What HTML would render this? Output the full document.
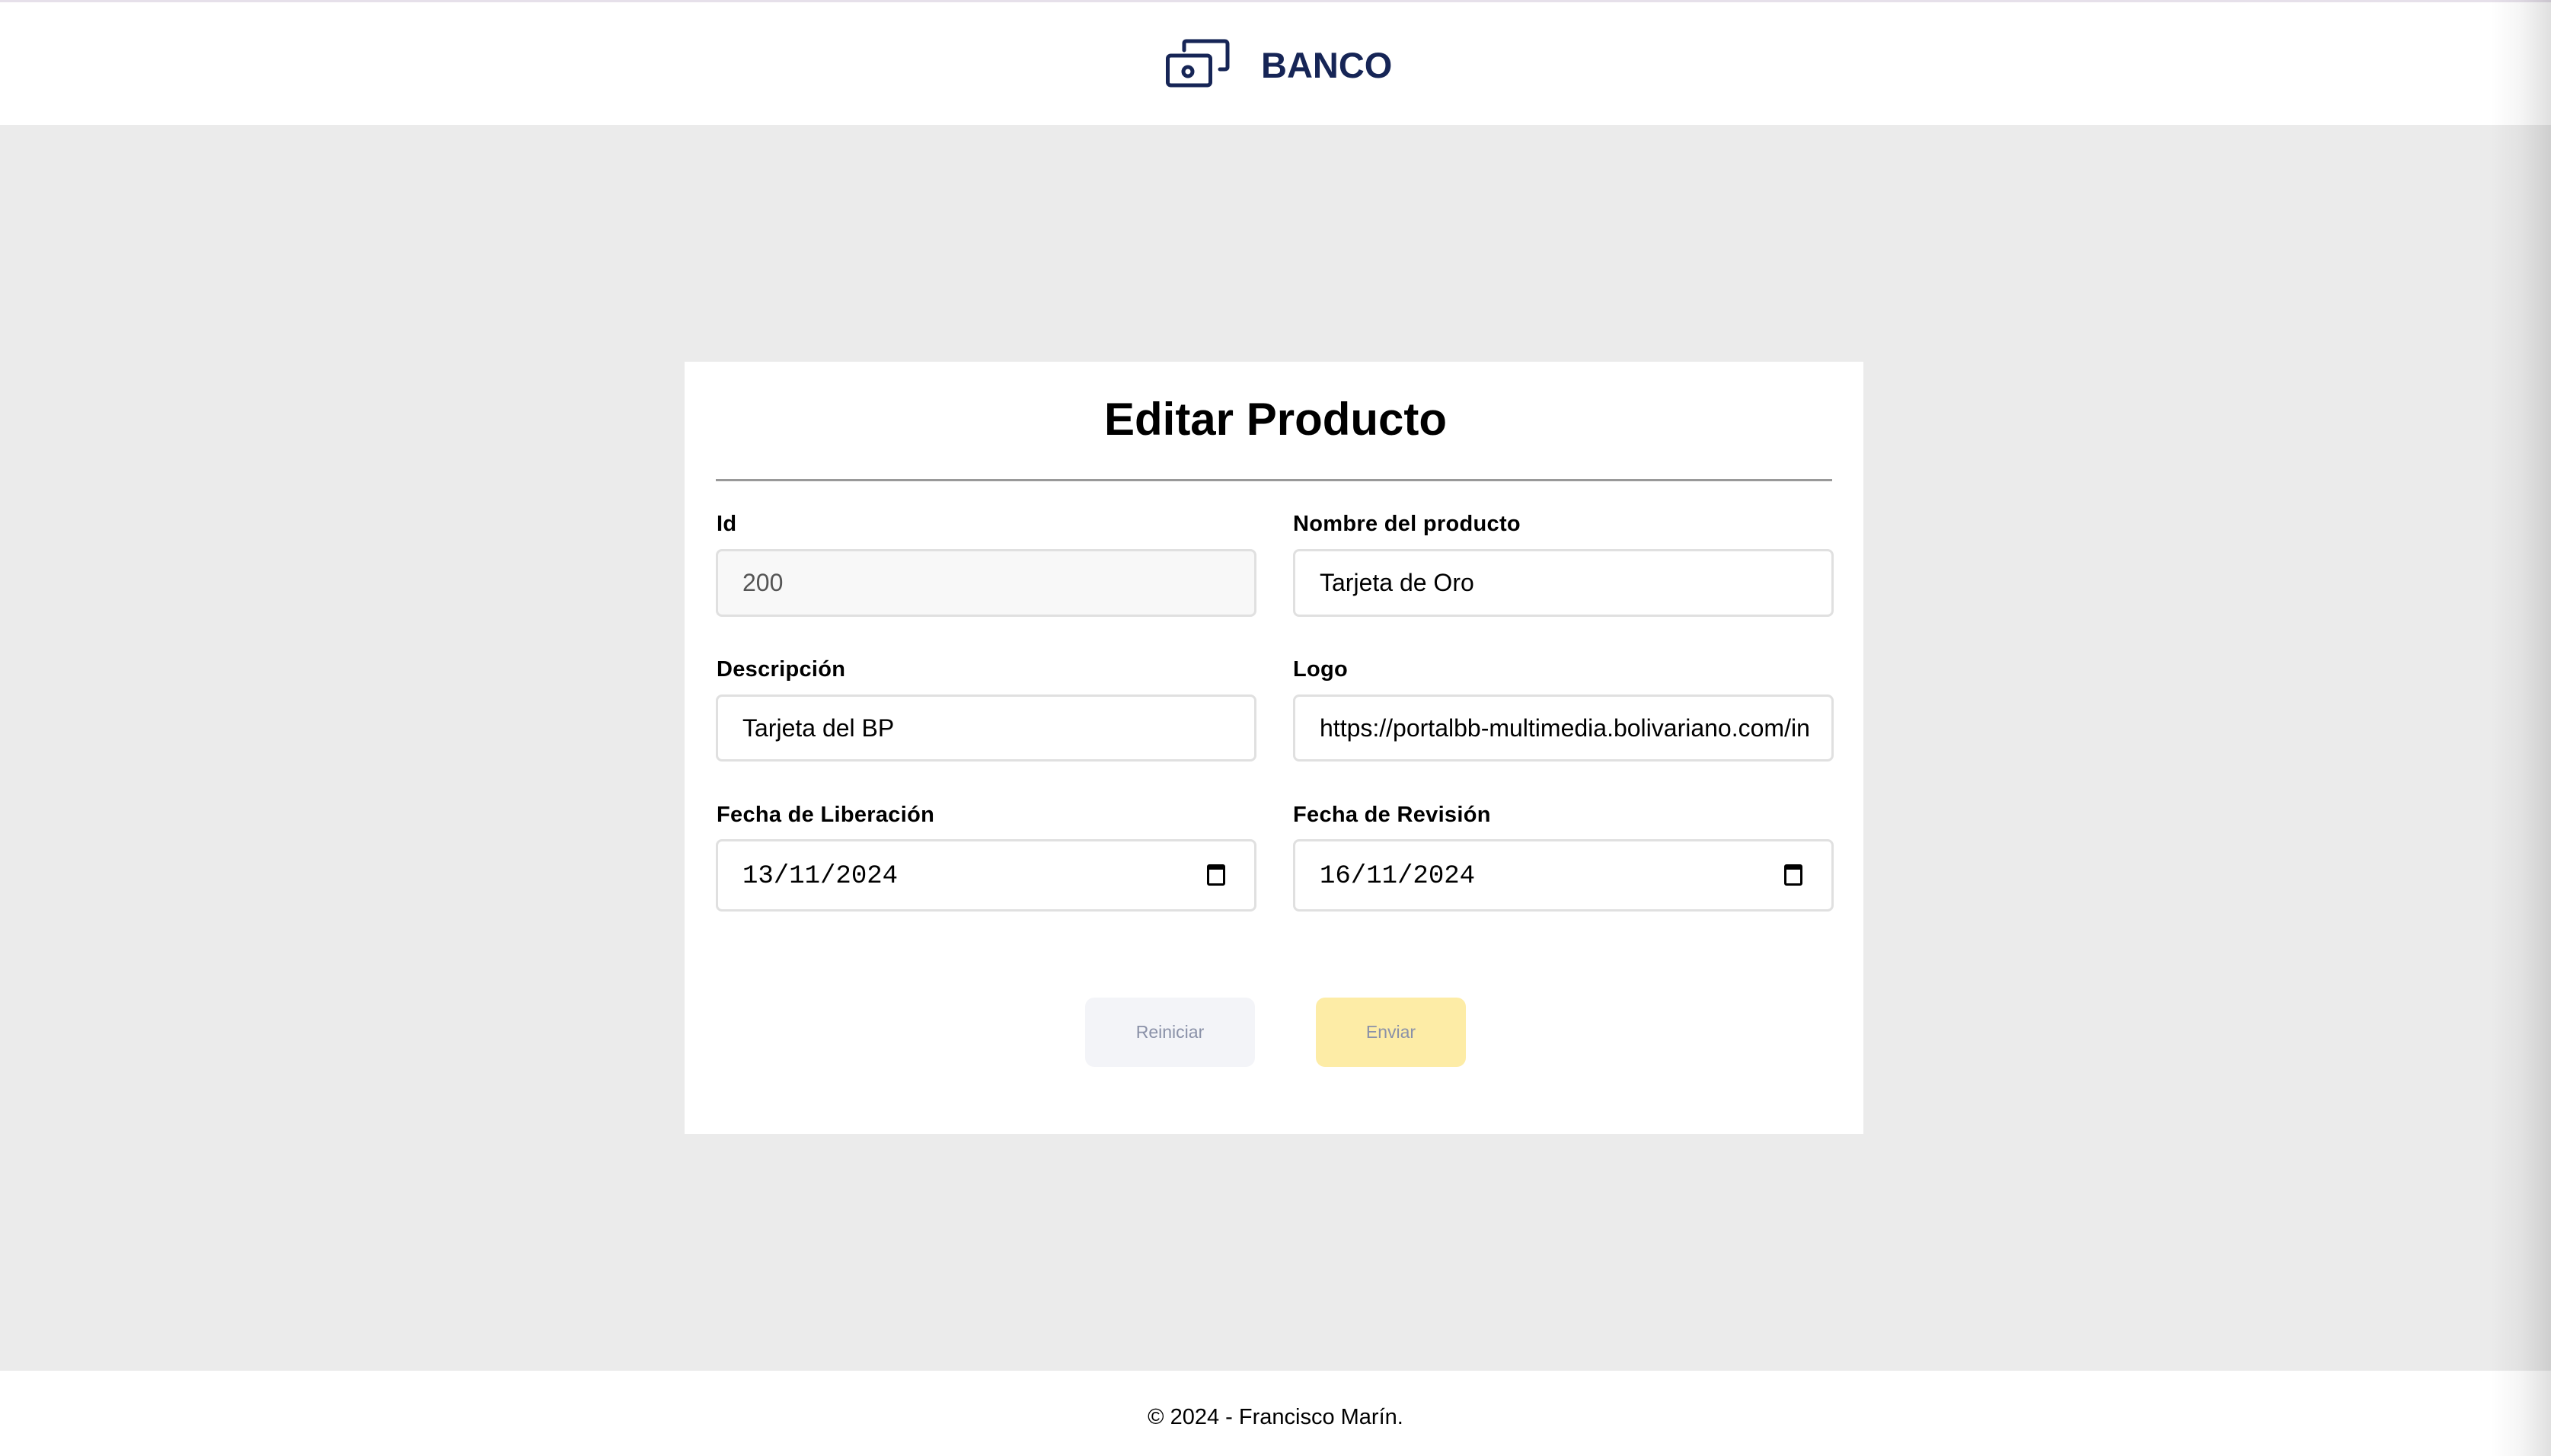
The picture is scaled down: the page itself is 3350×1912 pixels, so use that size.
<!DOCTYPE html>
<html><head><meta charset="utf-8"><style>
*{box-sizing:border-box;margin:0;padding:0}
body{width:3350px;height:1912px;position:relative;background:#ebebeb;font-family:"Liberation Sans",Arial,sans-serif;overflow:hidden}
.topline{position:absolute;left:0;top:0;width:3350px;height:3px;background:#e6e0ea}
.header{position:absolute;left:0;top:3px;width:3350px;height:161px;background:#fff}
.footer{position:absolute;left:0;top:1800px;width:3350px;height:112px;background:#fff}
.shadow{position:absolute;right:0;top:0;width:80px;height:1912px;background:linear-gradient(to right,rgba(0,0,0,0),rgba(0,0,0,0.04) 50%,rgba(0,0,0,0.12));}
.card{position:absolute;left:899px;top:475px;width:1548px;height:1014px;background:#fff}
.title{position:absolute;left:0;width:3350px;top:516px;text-align:center;font-weight:bold;font-size:60px;color:#000}
.hr{position:absolute;left:940px;top:629px;width:1466px;height:3px;background:#999}
.lbl{position:absolute;font-size:29px;color:#000;font-weight:bold;letter-spacing:0.3px}
.inp{position:absolute;border:3px solid #e0e0e0;border-radius:8px;background:#fff;font-size:32px;color:#000;padding-left:32px;display:flex;align-items:center}
.date{font-family:"Liberation Mono",monospace;font-size:34px;padding-top:2px}
.cal{position:absolute;right:38px;top:50%;margin-top:-15px;width:24px;height:28px;border:3px solid #000;border-top-width:7px;border-radius:3px}
.btn{position:absolute;border-radius:12px;font-size:23px;color:#8a91a8;display:flex;align-items:center;justify-content:center}
</style></head><body>
<div class="topline"></div>
<div class="header"></div>
<svg style="position:absolute;left:1530px;top:48px" width="90" height="72" viewBox="0 0 90 72">
<rect x="3.5" y="25" width="56" height="39" rx="4" fill="none" stroke="#162556" stroke-width="5"/>
<circle cx="30" cy="46" r="6" fill="none" stroke="#162556" stroke-width="5"/>
<path d="M25 18 V9 Q25 6 28 6 H78 Q82 6 82 10 V40 Q82 43 78 43 H72" fill="none" stroke="#162556" stroke-width="5" stroke-linecap="round"/>
</svg>
<div style="position:absolute;left:1656px;top:58px;font-size:47px;font-weight:bold;color:#162556;letter-spacing:0px">BANCO</div>
<div class="card"></div>
<div class="title">Editar Producto</div>
<div class="hr"></div>
<div class="lbl" style="left:941px;top:672px">Id</div>
<div class="lbl" style="left:1698px;top:672px">Nombre del producto</div>
<div class="inp" style="left:940px;top:721px;width:710px;height:89px;background:#f8f8f8;color:#555">200</div>
<div class="inp" style="left:1698px;top:721px;width:710px;height:89px">Tarjeta de Oro</div>
<div class="lbl" style="left:941px;top:863px">Descripción</div>
<div class="lbl" style="left:1698px;top:863px">Logo</div>
<div class="inp" style="left:940px;top:912px;width:710px;height:88px">Tarjeta del BP</div>
<div class="inp" style="left:1698px;top:912px;width:710px;height:88px;overflow:hidden;white-space:nowrap">https://portalbb-multimedia.bolivariano.com/in</div>
<div class="lbl" style="left:941px;top:1054px">Fecha de Liberación</div>
<div class="lbl" style="left:1698px;top:1054px">Fecha de Revisión</div>
<div class="inp date" style="left:940px;top:1102px;width:710px;height:95px">13/11/2024<span class="cal"></span></div>
<div class="inp date" style="left:1698px;top:1102px;width:710px;height:95px">16/11/2024<span class="cal"></span></div>
<div class="btn" style="left:1425px;top:1310px;width:223px;height:91px;background:#f3f4f8">Reiniciar</div>
<div class="btn" style="left:1728px;top:1310px;width:197px;height:91px;background:#fdeca6">Enviar</div>
<div class="footer"></div>
<div style="position:absolute;left:0;width:3350px;top:1845px;text-align:center;font-size:29px;color:#000">© 2024 - Francisco Marín.</div>
<div class="shadow"></div>
</body></html>
